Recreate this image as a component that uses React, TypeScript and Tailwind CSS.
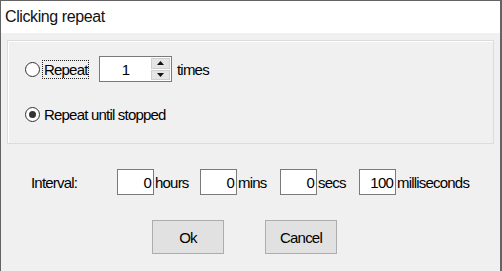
import React from 'react'

function Radio({ checked }: { checked?: boolean }) {
  return (
    <span className="w-[15px] h-[15px] rounded-full border border-[#333333] bg-white flex items-center justify-center shrink-0">
      {checked && <span className="w-[7px] h-[7px] rounded-full bg-[#333333]" />}
    </span>
  )
}

function NumBox({ value }: { value: string }) {
  return (
    <div className="w-[37px] h-[26px] border border-[#7a7a7a] bg-white flex items-center justify-end pr-[2px] shrink-0">
      {value}
    </div>
  )
}

function Spinner() {
  return (
    <div className="w-[73px] h-[26px] border border-[#7a7a7a] bg-white flex shrink-0">
      <div className="flex-1 flex items-center justify-center">1</div>
      <div className="w-[20px] flex flex-col gap-[1px] py-[1px] pr-[1px]">
        <div className="flex-1 bg-[#e5e5e5] border border-[#cfcfcf] flex items-center justify-center">
          <svg width="7" height="4" viewBox="0 0 7 4">
            <path d="M0 4 L3.5 0 L7 4 Z" fill="#111" />
          </svg>
        </div>
        <div className="flex-1 bg-[#e5e5e5] border border-[#cfcfcf] flex items-center justify-center">
          <svg width="7" height="4" viewBox="0 0 7 4">
            <path d="M0 0 L3.5 4 L7 0 Z" fill="#111" />
          </svg>
        </div>
      </div>
    </div>
  )
}

export default function App() {
  return (
    <div
      className="w-[502px] h-[271px] bg-[#f0f0f0] border-t border-l border-r-2 border-[#646464] flex flex-col text-[15px] tracking-[-0.8px] text-black leading-none"
      style={{ fontFamily: '"Liberation Sans", Arial, sans-serif' }}
    >
      <div className="h-[32px] bg-white pl-[4px] flex items-center text-[16px] tracking-[-0.4px] text-[#111]">
        Clicking repeat
      </div>

      <div className="px-[6px] pt-[7px]">
        <div className="h-[104px] border border-[#dcdcdc] shadow-[inset_1px_1px_0_#ffffff] pl-[17px] pt-[15px]">
          <div className="flex items-center h-[26px]">
            <Radio />
            <span className="ml-[2px] w-[47px] h-[19px] pl-[1px] border border-dotted border-[#222] flex items-center whitespace-nowrap">
              Repeat
            </span>
            <span className="ml-[10px]">
              <Spinner />
            </span>
            <span className="ml-[5px]">times</span>
          </div>
          <div className="flex items-center h-[20px] mt-[22px]">
            <Radio checked />
            <span className="ml-[4px]">Repeat until stopped</span>
          </div>
        </div>
      </div>

      <div className="flex items-center h-[26px] mt-[25px] pl-[30px]">
        <span className="w-[86px]">Interval:</span>
        <NumBox value="0" />
        <span className="w-[46px] pl-[1px]">hours</span>
        <NumBox value="0" />
        <span className="w-[43px] pl-[1px]">mins</span>
        <NumBox value="0" />
        <span className="w-[42px] pl-[1px]">secs</span>
        <NumBox value="100" />
        <span className="pl-[1px]">milliseconds</span>
      </div>

      <div className="flex gap-[41px] mt-[25px] pl-[151px]">
        <button className="w-[72px] h-[34px] bg-[#e1e1e1] border border-[#adadad] flex items-center justify-center">
          Ok
        </button>
        <button className="w-[72px] h-[34px] bg-[#e1e1e1] border border-[#adadad] flex items-center justify-center">
          Cancel
        </button>
      </div>
    </div>
  )
}
